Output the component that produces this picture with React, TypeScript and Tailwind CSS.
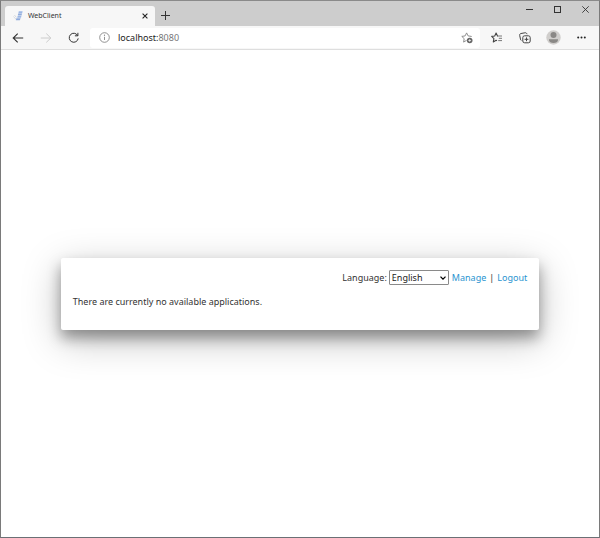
import { useState } from "react";

const LogoIcon = () => (
  <svg width="10" height="10" viewBox="0 0 10 10" aria-hidden="true">
    <path d="M5.8 0.3H9.6L9.2 2.2H5.4z" fill="#9db8e6" />
    <path d="M5.2 2.6H9L8.6 4.5H4.8z" fill="#8fabdc" />
    <path d="M4.6 4.9H8.4L8 6.8H4.2z" fill="#9db8e6" />
    <path d="M3.4 7.2H7.6L6.8 9.3H2.8z" fill="#8fabdc" />
    <path d="M0.4 5.6L3 8.2M1.4 4L3.4 6.4" stroke="#ccd0d8" strokeWidth="0.8" fill="none" />
  </svg>
);

const BackIcon = () => (
  <svg width="12" height="12" viewBox="0 0 12 12" fill="none" stroke="currentColor" strokeWidth="1.1" aria-hidden="true">
    <path d="M11.2 6H1.2M5.7 1.6L1.2 6L5.7 10.4" />
  </svg>
);

const ForwardIcon = () => (
  <svg width="12" height="12" viewBox="0 0 12 12" fill="none" stroke="currentColor" strokeWidth="1" aria-hidden="true">
    <path d="M0.8 6H10.8M6.3 1.6L10.8 6L6.3 10.4" />
  </svg>
);

const ReloadIcon = () => (
  <svg width="12" height="12" viewBox="0 0 12 12" fill="none" stroke="currentColor" strokeWidth="1" aria-hidden="true">
    <path d="M9.7 3.6A4.5 4.5 0 1 0 10.2 6.4" />
    <path d="M9.9 0.8V3.8H6.9" />
  </svg>
);

const InfoIcon = () => (
  <svg width="11" height="11" viewBox="0 0 11 11" fill="none" stroke="#777" strokeWidth="0.8" aria-hidden="true">
    <circle cx="5.5" cy="5.5" r="4.8" />
    <path d="M5.5 4.8V8" />
    <circle cx="5.5" cy="3.2" r="0.6" fill="#777" stroke="none" />
  </svg>
);

const StarAddIcon = () => (
  <svg width="12" height="12" viewBox="0 0 12 12" fill="none" aria-hidden="true">
    <path
      d="M5.6 8.3L2.6 10.1L3.2 6.7L0.8 4.4L4.1 3.9L5.6 0.9L7.1 3.9L10.4 4.4L9.7 5.1"
      stroke="#858585"
      strokeWidth="0.9"
      strokeLinejoin="round"
    />
    <circle cx="8.7" cy="8.5" r="2.8" fill="#666" />
    <path d="M8.7 7.1V9.9M7.3 8.5H10.1" stroke="#fff" strokeWidth="0.7" />
  </svg>
);

const FavoritesIcon = () => (
  <svg width="12" height="12" viewBox="0 0 12 12" fill="none" stroke="#444" strokeLinejoin="round" aria-hidden="true">
    <path d="M7.2 4.2L6.5 4L5.1 1.1L3.7 4L0.7 4.4L2.9 6.6L2.3 9.9L5.1 8.3L6 8.8" strokeWidth="1.1" />
    <path d="M7.2 4H11M7.8 6.3H11M7.2 8.6H11" strokeWidth="0.7" />
  </svg>
);

const CollectionsIcon = () => (
  <svg width="12" height="12" viewBox="0 0 12 12" fill="none" stroke="#444" strokeWidth="1" strokeLinejoin="round" aria-hidden="true">
    <rect x="3.8" y="3.8" width="7.4" height="7" rx="1.8" />
    <path d="M7.5 5.4V9.2M5.6 7.3H9.4" />
    <path d="M2.4 8.4L1.6 7.8L0.7 3.4C0.5 2.3 1 1.7 2 1.5L5.9 0.8C7 0.6 7.7 1.1 8 2.2" />
  </svg>
);

const ProfileIcon = () => (
  <svg width="15" height="15" viewBox="0 0 15 15" aria-hidden="true">
    <circle cx="7.5" cy="7.5" r="7.2" fill="#d0cecc" />
    <circle cx="7.5" cy="5" r="3" fill="#8a8886" />
    <path d="M3 9.2H12V10C12 12 10 13 7.5 13S3 12 3 10z" fill="#8a8886" />
  </svg>
);

const MoreIcon = () => (
  <svg width="9" height="3" viewBox="0 0 9 3" fill="#222" aria-hidden="true">
    <circle cx="1.2" cy="1.5" r="1" />
    <circle cx="4.5" cy="1.5" r="1" />
    <circle cx="7.8" cy="1.5" r="1" />
  </svg>
);

const TitleBar = () => (
  <div className="flex h-[25px] items-end bg-[#cdcdcd] pl-1">
    <div className="flex h-[20px] w-[150px] items-center rounded-t-[3px] bg-[#f7f7f7] pl-2 pr-1">
      <LogoIcon />
      <span className="ml-[5px] flex-1 text-[7px] leading-3 text-[#333]">WebClient</span>
      <button aria-label="Close tab" className="flex h-3 w-3 items-center justify-center">
        <svg width="6" height="6" viewBox="0 0 6 6" stroke="#222" strokeWidth="1.1">
          <path d="M0.6 0.6L5.4 5.4M5.4 0.6L0.6 5.4" />
        </svg>
      </button>
    </div>
    <button aria-label="New tab" className="flex h-[21px] w-5 items-center justify-center">
      <svg width="9" height="9" viewBox="0 0 9 9" stroke="#333" strokeWidth="1">
        <path d="M4.5 0V9M0 4.5H9" />
      </svg>
    </button>
    <div className="ml-auto flex self-start">
      <button aria-label="Minimize" className="flex h-4 w-7 items-center justify-center">
        <svg width="7" height="7" viewBox="0 0 7 7" stroke="#333">
          <path d="M0 3.5H7" />
        </svg>
      </button>
      <button aria-label="Maximize" className="flex h-4 w-7 items-center justify-center">
        <svg width="7" height="7" viewBox="0 0 7 7" fill="none" stroke="#333">
          <rect x="0.5" y="0.5" width="6" height="6" />
        </svg>
      </button>
      <button aria-label="Close" className="flex h-4 w-7 items-center justify-center">
        <svg width="7" height="7" viewBox="0 0 7 7" stroke="#333" strokeWidth="0.9">
          <path d="M0.3 0.3L6.7 6.7M6.7 0.3L0.3 6.7" />
        </svg>
      </button>
    </div>
  </div>
);

const Toolbar = () => (
  <div className="flex h-6 items-center border-b border-[#dedede] bg-[#f7f7f7] pl-[3px] pr-1 text-[#333]">
    <button aria-label="Back" className="flex w-7 justify-center">
      <BackIcon />
    </button>
    <button aria-label="Forward" disabled className="flex w-7 justify-center text-[#ccc]">
      <ForwardIcon />
    </button>
    <button aria-label="Refresh" className="flex w-7 justify-center">
      <ReloadIcon />
    </button>
    <div className="ml-0.5 flex h-5 flex-1 items-center rounded-[3px] bg-white pl-[9px] pr-[7px]">
      <InfoIcon />
      <span className="ml-2 flex-1 text-[9px] leading-4 text-[#222]">
        localhost:<span className="text-[#777]">8080</span>
      </span>
      <button aria-label="Add to favorites">
        <StarAddIcon />
      </button>
    </div>
    <div className="ml-[3px] flex">
      <button aria-label="Favorites" className="flex w-7 items-center justify-center">
        <FavoritesIcon />
      </button>
      <button aria-label="Collections" className="flex w-7 items-center justify-center">
        <CollectionsIcon />
      </button>
      <button aria-label="Profile" className="flex w-7 items-center justify-center">
        <ProfileIcon />
      </button>
      <button aria-label="Settings and more" className="flex w-7 items-center justify-center">
        <MoreIcon />
      </button>
    </div>
  </div>
);

const ApplicationsCard = () => {
  const [language, setLanguage] = useState("English");

  return (
    <div className="w-4/5 rounded-[2px] bg-white p-3 pb-5 text-[9px] leading-4 text-[#333] shadow-[0_10px_38px_rgba(0,0,0,0.25),0_8px_14px_rgba(0,0,0,0.35)]">
      <div className="flex items-center justify-end">
        <label htmlFor="language">Language:</label>
        <div className="relative ml-0.5 flex">
          <select
            id="language"
            value={language}
            onChange={(e) => setLanguage(e.target.value)}
            className="h-[15px] w-[60px] appearance-none rounded-[1px] border border-[#8a8a8a] bg-white pl-0.5 leading-3 text-[#222]"
          >
            <option>English</option>
          </select>
          <svg className="pointer-events-none absolute right-[3px] top-1.5" width="6" height="4" viewBox="0 0 6 4" fill="none" stroke="#000" strokeWidth="1.3">
            <path d="M0.5 0.6L3 3.1L5.5 0.6" />
          </svg>
        </div>
        <a href="#manage" className="ml-[3px] text-[#2a94d0]">Manage</a>
        <span className="mx-[3px]">|</span>
        <a href="#logout" className="text-[#2a94d0]">Logout</a>
      </div>
      <p className="mt-2">There are currently no available applications.</p>
    </div>
  );
};

const App = () => (
  <div className="flex min-h-screen flex-col border border-t-[#8a8a8a] border-x-[#7a7a7a] border-b-[#6b7075] bg-white font-['Noto_Sans','Open_Sans',sans-serif]">
    <TitleBar />
    <Toolbar />
    <main className="flex flex-1 items-center justify-center">
      <ApplicationsCard />
    </main>
  </div>
);

export default App;
